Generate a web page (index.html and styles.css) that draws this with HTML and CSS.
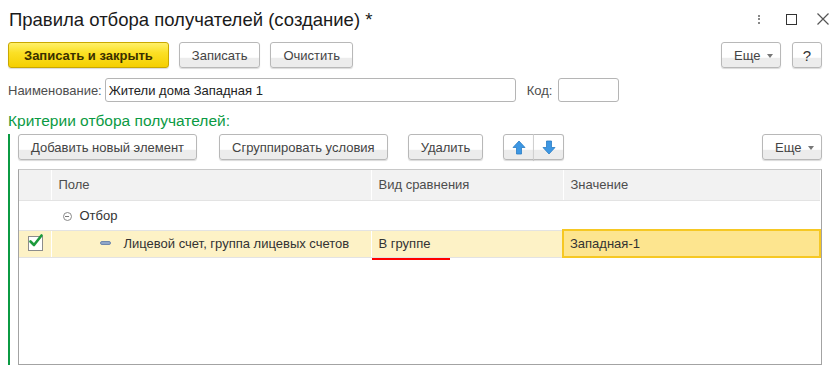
FILE: index.html
```html
<!DOCTYPE html>
<html lang="ru">
<head>
  <meta charset="UTF-8" />
  <title>Правила отбора получателей (создание) *</title>
  <link rel="stylesheet" href="styles.css">
</head>
<body>
  <div class="form">
    <div class="head">
      <h1>Правила отбора получателей (создание) *</h1>
      <div class="wnd">
        <span class="dots"><i></i><i></i><i></i></span>
        <span class="max"></span>
        <svg class="close" width="12" height="12" viewBox="0 0 12 12"><path d="M0.5 0.5 L11.5 11.5 M11.5 0.5 L0.5 11.5" stroke="#555" stroke-width="1.2" fill="none"/></svg>
      </div>
    </div>

    <div class="bar">
      <button class="btn main">Записать и закрыть</button>
      <button class="btn">Записать</button>
      <button class="btn">Очистить</button>
      <div class="spacer"></div>
      <button class="btn more">Еще <span class="tri"></span></button>
      <button class="btn help">?</button>
    </div>

    <div class="fields">
      <label>Наименование:</label>
      <input class="name" type="text" value="Жители дома Западная 1" />
      <label class="code-lbl">Код:</label>
      <input class="code" type="text" value="" />
    </div>

    <h2>Критерии отбора получателей:</h2>

    <div class="group">
      <div class="bar sub">
        <button class="btn add">Добавить новый элемент</button>
        <button class="btn">Сгруппировать условия</button>
        <button class="btn">Удалить</button>
        <div class="pair">
          <button class="btn arr">
            <svg width="14" height="15" viewBox="0 0 14 15"><path d="M7 1 L13 7.5 L9.5 7.5 L9.5 14 L4.5 14 L4.5 7.5 L1 7.5 Z" fill="#3d97e3" stroke="#2a7cc4" stroke-width="0.8"/></svg>
          </button>
          <button class="btn arr">
            <svg width="14" height="15" viewBox="0 0 14 15"><path d="M7 14 L13 7.5 L9.5 7.5 L9.5 1 L4.5 1 L4.5 7.5 L1 7.5 Z" fill="#3d97e3" stroke="#2a7cc4" stroke-width="0.8"/></svg>
          </button>
        </div>
        <div class="spacer"></div>
        <button class="btn more">Еще <span class="tri"></span></button>
      </div>

      <div class="grid">
        <table>
          <colgroup>
            <col class="c-chk"><col class="c-field"><col class="c-cmp"><col>
          </colgroup>
          <thead>
            <tr><th></th><th>Поле</th><th>Вид сравнения</th><th>Значение</th></tr>
          </thead>
          <tbody>
            <tr class="grp">
              <td></td>
              <td><span class="fold"></span>Отбор</td>
              <td></td>
              <td></td>
            </tr>
            <tr class="cur">
              <td><span class="chk"><svg width="16" height="16" viewBox="0 0 16 16"><path d="M2.5 7.5 L6 11 L13.5 1.5" stroke="#1c9a3c" stroke-width="2.6" fill="none" stroke-linecap="round" stroke-linejoin="round"/></svg></span></td>
              <td class="lvl2"><span class="leaf"></span>Лицевой счет, группа лицевых счетов</td>
              <td><span class="mark">В группе</span></td>
              <td class="val">Западная-1</td>
            </tr>
          </tbody>
        </table>
      </div>
    </div>
  </div>
</body>
</html>
```

FILE: styles.css
```css
* { box-sizing: border-box; margin: 0; padding: 0; }
body { font-family: Arial, "Liberation Sans", sans-serif; font-size: 13px; color: #333; background: #fff; }
.form { width: 836px; height: 373px; padding: 0 14px 0 8px; overflow: hidden; }

.head { display: flex; align-items: flex-start; height: 42px; }
h1 { font-weight: normal; font-size: 18.5px; line-height: 24px; padding: 8px 0 0 1px; color: #1a1a1a; flex: 1; }
.wnd { display: flex; align-items: center; padding-top: 13px; margin-right: -7px; }
.dots { display: flex; flex-direction: column; gap: 1.5px; width: 3px; margin-right: 25px; }
.dots i { display: block; width: 2px; height: 2px; background: #888; }
.max { width: 11px; height: 11px; border: 1.5px solid #333; margin-right: 20px; }
.close { display: block; }

.bar { display: flex; align-items: center; gap: 10px; height: 26px; }
.spacer { flex: 1; }
.btn {
  height: 26px; padding: 0 12px; font-family: inherit; font-size: 13px; color: #444;
  border: 1px solid #b8b8b8; border-radius: 3px; cursor: pointer;
  background: linear-gradient(#ffffff 0%, #ffffff 60%, #ececec 62%, #ececec 100%);
  box-shadow: 0 1px 1px rgba(0,0,0,0.15);
}
.btn.main {
  font-weight: bold; color: #3a3000; padding: 0 15px;
  border-color: #c9a800;
  background: linear-gradient(#fff06a 0%, #fbe026 40%, #f5cf00 100%);
}
.btn.more { width: 60px; padding: 0 0 0 12px; text-align: left; margin-right: 1px; }
.tri { display: inline-block; width: 0; height: 0; border: 3.5px solid transparent; border-top: 4px solid #777; border-bottom: 0; vertical-align: middle; margin-left: 3px; }
.btn.help { width: 30px; padding: 0; font-size: 15px; color: #333; }

.fields { display: flex; align-items: center; height: 24px; margin-top: 10px; }
.fields label { color: #4d4d4d; margin-right: 3px; }
.fields input {
  height: 24px; border: 1px solid #b5b5b5; border-radius: 3px; font-family: inherit; font-size: 13px;
  color: #222; padding: 0 3px; outline: none;
}
.name { width: 411px; }
.code-lbl { margin-left: 11px; }
.code { width: 61px; margin-left: 3px; }

h2 { font-weight: normal; font-size: 15.5px; line-height: 18px; color: #0b9a43; margin-top: 10px; height: 22px; }

.group { border-left: 2px solid #0b9a43; padding-left: 8px; height: 231px; }
.bar.sub { gap: 0; }
.bar.sub > .btn { margin-right: 20px; }
.bar.sub > .btn.add { margin-right: 22px; }
.bar.sub > .btn.more { margin-right: 0; }
.pair { display: flex; }
.btn.arr { width: 31px; padding: 0; display: flex; align-items: center; justify-content: center; }
.pair .arr:first-child { border-radius: 3px 0 0 3px; }
.pair .arr:last-child { border-radius: 0 3px 3px 0; border-left-color: #d0d0d0; margin-left: -1px; }

.grid { margin-top: 9px; height: 196px; border: 1px solid #a3a3a3; border-top-color: #c8c8c8; }
table { width: 100%; border-collapse: collapse; table-layout: fixed; }
.c-chk { width: 32px; }
.c-field { width: 320px; }
.c-cmp { width: 192px; }
th { height: 30px; background: #f2f2f2; font-weight: normal; color: #4d4d4d; text-align: left; padding: 0 7px; border-left: 1px solid #fff; border-bottom: 1px solid #e3e3e3; }
th:first-child { border-left: 0; }
td { padding: 0 7px; border-bottom: 1px solid #e3e3e3; border-left: 1px solid #fff; white-space: nowrap; color: #333; }
td:first-child { border-left: 0; }
.grp td { height: 30px; }
.fold { display: inline-block; width: 9px; height: 9px; border: 1px solid #8a8a8a; border-radius: 50%; position: relative; vertical-align: -1px; margin: 0 8px 0 4px; }
.fold::after { content: ""; position: absolute; left: 1.5px; top: 3px; width: 4px; height: 1px; background: #777; }
.cur td { height: 27px; background: #fdf2c6; }
.chk { display: block; position: relative; width: 15px; height: 15px; border: 1px solid #8c8c8c; background: #fff; margin-left: 2px; }
.chk svg { position: absolute; left: -1px; top: -3px; }
.lvl2 { padding-left: 48px; }
.leaf { display: inline-block; width: 11px; height: 4px; border-radius: 2px; background: #8fa6c8; border: 1px solid #6f88ad; vertical-align: 3px; margin-right: 13px; }
.mark { display: inline-block; position: relative; }
.mark::after { content: ""; position: absolute; left: -7px; right: -20px; bottom: -9px; height: 2px; background: #f00; }
.cur td.val { background: #fde58f; border: 2px solid #f6c823; padding-left: 6px; }
```
